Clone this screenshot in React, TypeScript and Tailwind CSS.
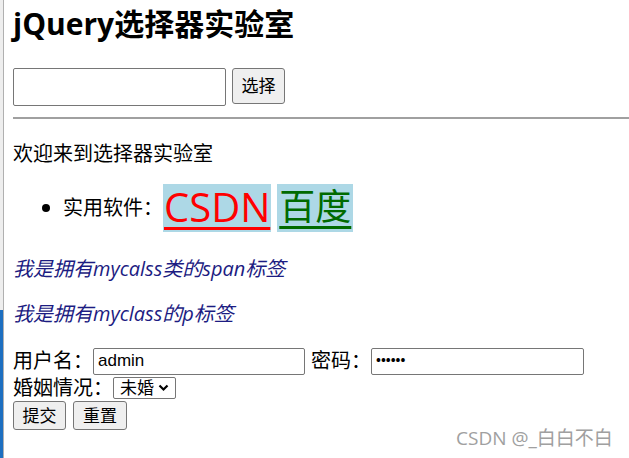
import React from "react";

const cjk = { fontFamily: '"Open Sans", "Noto Sans CJK SC", sans-serif' };
const arial = { fontFamily: '"Liberation Sans", "Noto Sans CJK SC", sans-serif' };

function Btn({ children, w }: { children: React.ReactNode; w: string }) {
  return (
    <div
      className={`${w} h-[29px] flex items-center justify-center border border-[#767676] rounded-[3px] bg-[#efefef] text-[17px] text-black`}
      style={cjk}
    >
      {children}
    </div>
  );
}

export default function App() {
  return (
    <div className="relative w-[629px] h-[458px] bg-white overflow-hidden flex text-black" style={cjk}>
      {/* left window edge */}
      <div className="w-[4px] flex flex-col border-r border-[#b0b0b0]">
        <div className="h-[310px] bg-[#eeeeee]" />
        <div className="flex-1 bg-[#1d6fc0]" />
      </div>

      <div className="flex-1 flex flex-col pl-[9px]">
        <h2 className="mt-[6px] h-[36px] leading-[36px] text-[30px] font-bold whitespace-nowrap">
          jQuery选择器实验室
        </h2>

        <div className="mt-[26px] flex items-start">
          <div className="w-[213px] h-[38px] border border-[#767676] rounded-[2px] bg-white" />
          <div className="ml-[6px] w-[53px] h-[36px] flex items-center justify-center border border-[#767676] rounded-[3px] bg-[#efefef] text-[17px]">
            选择
          </div>
        </div>

        <div className="mt-[11px] border-t-[2px] border-[#a0a0a0]" />

        <p className="mt-[23px] h-[24px] leading-[24px] text-[20px]">欢迎来到选择器实验室</p>

        <div className="mt-[18px] h-[48px] flex items-center">
          <div className="w-[50px] flex justify-end pr-[13px]">
            <div className="w-[8px] h-[8px] rounded-full bg-black" />
          </div>
          <span className="text-[20px] leading-[24px]">实用软件：</span>
          <span className="ml-[0px] inline-block h-[48px] leading-[46px] px-[1px] bg-[#add8e6] text-[40px] text-[#ff0000] underline decoration-[3px] underline-offset-[5px]">
            CSDN
          </span>
          <span className="ml-[6px] inline-block h-[48px] leading-[46px] px-[2px] bg-[#add8e6] text-[36px] text-[#006a00] underline decoration-[3px] underline-offset-[6px]">
            百度
          </span>
        </div>

        <p className="mt-[25px] h-[24px] leading-[24px] text-[20px] italic text-[#1c1c82]">
          我是拥有mycalss类的span标签
        </p>
        <p className="mt-[21px] h-[24px] leading-[24px] text-[20px] italic text-[#1c1c82]">
          我是拥有myclass的p标签
        </p>

        <div className="mt-[21px] h-[28px] flex items-center text-[20px]">
          <span>用户名：</span>
          <div
            className="ml-[0px] w-[212px] h-[27px] border border-[#767676] rounded-[2px] flex items-center pl-[4px] text-[17px]"
            style={arial}
          >
            admin
          </div>
          <span className="ml-[6px]">密码：</span>
          <div className="ml-[0px] w-[213px] h-[27px] border border-[#767676] rounded-[2px] flex items-center pl-[4px] text-[13px] font-bold">
            ••••••
          </div>
        </div>

        <div className="mt-[2px] h-[22px] flex items-center text-[20px]">
          <span>婚姻情况：</span>
          <div className="ml-[0px] w-[63px] h-[22px] border border-[#767676] rounded-[2px] flex items-center pl-[6px] text-[17px]">
            未婚
            <svg className="ml-[4px]" width="11" height="8" viewBox="0 0 11 8">
              <path d="M1.5 1.5 L5.5 5.5 L9.5 1.5" stroke="#000" strokeWidth="2.2" fill="none" />
            </svg>
          </div>
        </div>

        <div className="mt-[2px] flex items-center gap-[7px]">
          <Btn w="w-[53px]">提交</Btn>
          <Btn w="w-[54px]">重置</Btn>
        </div>
      </div>

      <div className="absolute left-[456px] top-[424px] text-[19px] text-[#a0a0a0] whitespace-nowrap" style={cjk}>
        CSDN @_白白不白
      </div>
    </div>
  );
}
